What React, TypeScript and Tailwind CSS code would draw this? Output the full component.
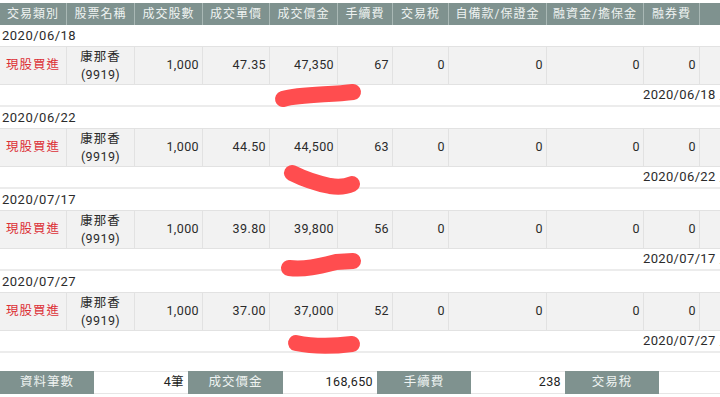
import React from 'react';

const cols = 'grid grid-cols-[67px_68px_68px_67px_68px_55px_56px_98px_97px_56px_80px]';

const headers = ['交易類別', '股票名稱', '成交股數', '成交單價', '成交價金', '手續費', '交易稅', '自備款/保證金', '融資金/擔保金', '融券費', '利息'];

interface Trade {
  date: string;
  qty: string;
  price: string;
  amount: string;
  fee: string;
}

const trades: Trade[] = [
  { date: '2020/06/18', qty: '1,000', price: '47.35', amount: '47,350', fee: '67' },
  { date: '2020/06/22', qty: '1,000', price: '44.50', amount: '44,500', fee: '63' },
  { date: '2020/07/17', qty: '1,000', price: '39.80', amount: '39,800', fee: '56' },
  { date: '2020/07/27', qty: '1,000', price: '37.00', amount: '37,000', fee: '52' },
];

const numCell = 'flex items-center justify-end pr-[3px] border-r border-[#e2e2e2]';

const TradeGroup: React.FC<{ t: Trade }> = ({ t }) => (
  <div>
    {/* date row */}
    <div className="h-[21px] flex items-center pl-[2px] tracking-[0.5px] text-[13px] text-[#2b2b2b] bg-white">
      {t.date}
    </div>
    {/* data row */}
    <div className={`${cols} h-[39px] bg-[#f2f2f2] border-y border-[#e2e2e2] text-[12.5px] text-[#2b2b2b] tracking-[0.4px]`}>
      <div className="flex items-center justify-center text-[#dc2f36] tracking-[1px] border-r border-[#e2e2e2]">現股買進</div>
      <div className="flex flex-col items-center justify-center leading-[18px] border-r border-[#e2e2e2]">
        <span className="tracking-[1px]">康那香</span>
        <span>(9919)</span>
      </div>
      <div className={numCell}>{t.qty}</div>
      <div className={numCell}>{t.price}</div>
      <div className={numCell}>{t.amount}</div>
      <div className={numCell}>{t.fee}</div>
      <div className={numCell}>0</div>
      <div className={numCell}>0</div>
      <div className={numCell}>0</div>
      <div className={numCell}>0</div>
      <div className={numCell}></div>
    </div>
    {/* footer row: trade time, runs past the visible edge */}
    <div className={`${cols} h-[22px] bg-white border-b-2 border-[#ececec] text-[13px] text-[#2b2b2b] tracking-[0.35px]`}>
      <div className="col-span-9" />
      <div className="col-span-2 flex items-center whitespace-nowrap -ml-[1px]">{t.date} 人員</div>
    </div>
  </div>
);

const SumLabel: React.FC<{ children: React.ReactNode }> = ({ children }) => (
  <div className="flex items-center justify-center bg-[#7f928f] text-[#eef2f1] tracking-[1px]">{children}</div>
);

const SumValue: React.FC<{ children?: React.ReactNode }> = ({ children }) => (
  <div className="flex items-center justify-end pr-[4px] bg-white border-y border-[#e6e6e6] text-[#222]">{children}</div>
);

export default function App() {
  return (
    <div className="relative w-[720px] h-[397px] overflow-hidden bg-white font-['Roboto','Noto_Sans_CJK_TC',sans-serif]">
      <div className="w-[780px] pt-[3px]">
        {/* header */}
        <div className={`${cols} h-[22px] bg-[#7f928f] text-[12px] text-[#eef2f1] tracking-[1px]`}>
          {headers.map((h) => (
            <div key={h} className="flex items-center justify-center whitespace-nowrap border-r border-[#a9b8b5]">
              {h}
            </div>
          ))}
        </div>

        {trades.map((t) => (
          <TradeGroup key={t.date} t={t} />
        ))}

        {/* summary */}
        <div className="mt-[18px] grid grid-cols-[94px_94px_95px_94px_94px_94px_94px_94px] h-[23px] text-[12.5px] tracking-[0.4px]">
          <SumLabel>資料筆數</SumLabel>
          <SumValue>4筆</SumValue>
          <SumLabel>成交價金</SumLabel>
          <SumValue>168,650</SumValue>
          <SumLabel>手續費</SumLabel>
          <SumValue>238</SumValue>
          <SumLabel>交易稅</SumLabel>
          <SumValue />
        </div>
      </div>

      {/* red redaction marks over the screenshot */}
      <svg className="absolute left-0 top-0 pointer-events-none" width="720" height="397" viewBox="0 0 720 397">
        <g fill="none" stroke="#ff4d4f" strokeWidth="16" strokeLinecap="round" strokeLinejoin="round">
          <path d="M283 99 C300 94 330 95 353 92" />
          <path d="M292 173 Q310 182 330 186 Q343 188 352 184" />
          <path d="M289 268 C305 270 320 266 336 262 L353 261" />
          <path d="M296 343 Q320 348 352 344" />
        </g>
      </svg>
    </div>
  );
}
